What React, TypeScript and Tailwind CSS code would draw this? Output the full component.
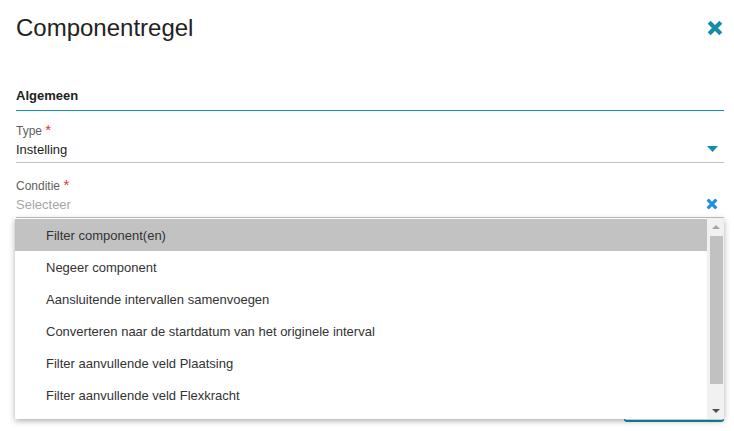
const options = [
  "Filter component(en)",
  "Negeer component",
  "Aansluitende intervallen samenvoegen",
  "Converteren naar de startdatum van het originele interval",
  "Filter aanvullende veld Plaatsing",
  "Filter aanvullende veld Flexkracht",
]

function CrossIcon({ size, color }: { size: number; color: string }) {
  return (
    <svg width={size} height={size} viewBox="0 0 16 16">
      <path d="M2.2 2.2 L13.8 13.8 M13.8 2.2 L2.2 13.8" stroke={color} strokeWidth={4.2} />
    </svg>
  )
}

function Field({ label, children }: { label: string; children: React.ReactNode }) {
  return (
    <div className="border-b border-[#c4c4c4] pb-[4px]">
      <div className="h-[16px] leading-[16px] text-[12px] text-[#5f5f5f] pt-px">
        {label} <span className="text-[#e8323c] text-[15px] leading-[10px]">*</span>
      </div>
      <div className="mt-[2px] h-[18px] flex items-center justify-between pr-[6px]">{children}</div>
    </div>
  )
}

export default function App() {
  return (
    <div className="relative w-[734px] h-[431px] bg-white overflow-hidden flex flex-col pl-4 pr-[10px] font-['Liberation_Sans',Arial,sans-serif]">
      <div className="h-[56px] flex items-center justify-between pr-px">
        <h1 className="text-[24px] text-[#222]">Componentregel</h1>
        <CrossIcon size={16} color="#138ea8" />
      </div>

      <div className="mt-[29px] border-b border-[#1593ad] pb-[5px]">
        <div className="h-[20px] leading-[20px] pt-px text-[13px] font-bold text-[#222]">Algemeen</div>
      </div>

      <div className="mt-[11px] flex flex-col gap-[14px]">
        <Field label="Type">
          <span className="text-[13px] text-[#1c1c1c] pt-px">Instelling</span>
          <svg width="11" height="6" viewBox="0 0 11 6">
            <path d="M0 0 H11 L5.5 6 Z" fill="#138ea8" />
          </svg>
        </Field>
        <Field label="Conditie">
          <span className="text-[13px] text-[#a6a6a6] pt-px">Selecteer</span>
          <CrossIcon size={12} color="#1e8fe1" />
        </Field>
      </div>

      <div className="mt-auto mb-[9px] flex justify-end">
        <button className="w-[100px] h-[34px] rounded-[3px] border border-b-2 border-[#138ea8] text-[13px] text-[#138ea8]">
          Opslaan
        </button>
      </div>

      <div className="absolute left-[15px] top-[218px] w-[709px] h-[201px] bg-white flex shadow-[0_2px_6px_rgba(0,0,0,0.32)]">
        <ul className="flex-1 pt-px overflow-hidden">
          {options.map((o, i) => (
            <li
              key={o}
              className={`h-[32px] flex items-center pt-[2px] pl-[31px] text-[13px] text-[#333] ${i === 0 ? "bg-[#c2c2c2]" : ""}`}
            >
              {o}
            </li>
          ))}
        </ul>
        <div className="w-[17px] bg-[#f1f1f1] flex flex-col items-center">
          <div className="h-[17px] flex items-center justify-center">
            <svg width="8" height="4" viewBox="0 0 8 4">
              <path d="M0 4 H8 L4 0 Z" fill="#a3a3a3" />
            </svg>
          </div>
          <div className="mt-px ml-px w-[13px] h-[148px] bg-[#c1c1c1]" />
          <div className="flex-1" />
          <div className="h-[17px] flex items-center justify-center">
            <svg width="8" height="4" viewBox="0 0 8 4">
              <path d="M0 0 H8 L4 4 Z" fill="#505050" />
            </svg>
          </div>
        </div>
      </div>
    </div>
  )
}
